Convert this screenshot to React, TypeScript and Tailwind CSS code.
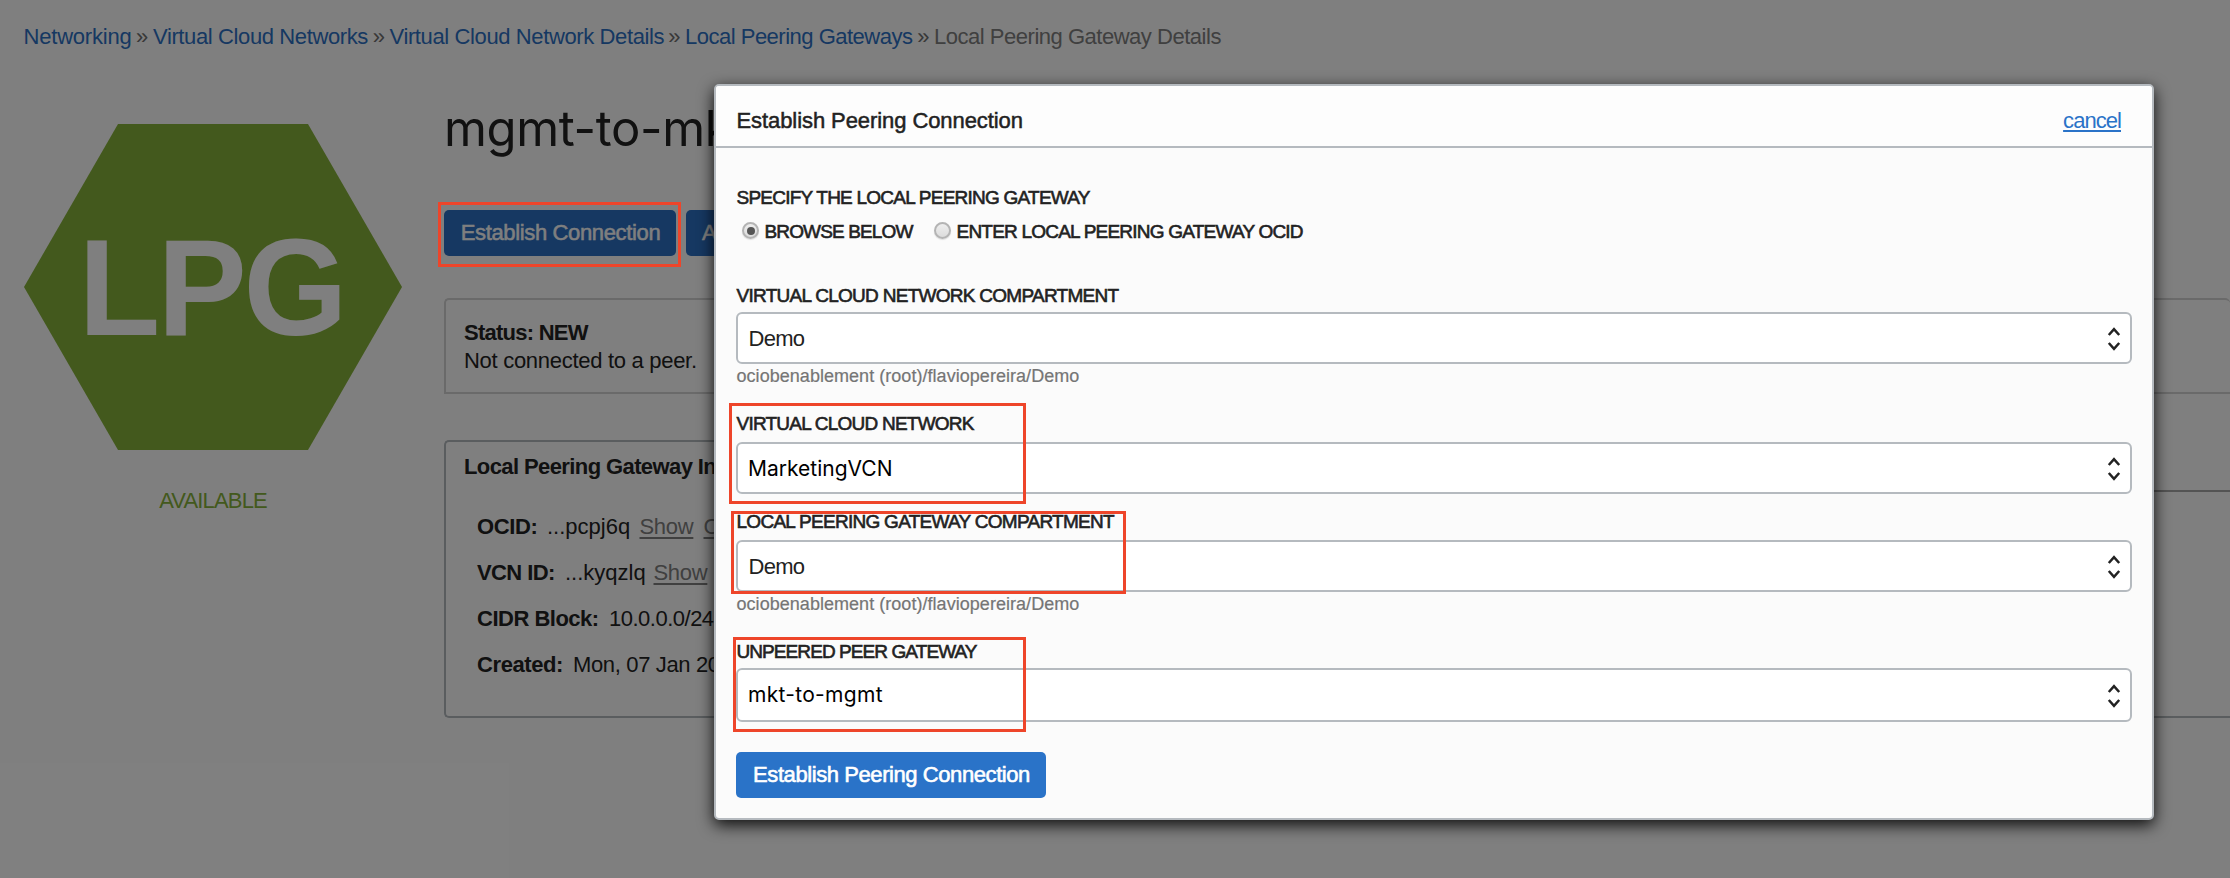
import type { ReactNode } from "react";

const crumbs = [
  { label: "Networking", className: "w-[129.5px] tracking-[-0.2px]" },
  { label: "Virtual Cloud Networks", className: "w-[236.5px] tracking-[-0.38px]" },
  { label: "Virtual Cloud Network Details", className: "w-[295.5px] tracking-[-0.38px]" },
  { label: "Local Peering Gateways", className: "w-[249px] tracking-[-0.5px]" },
];

function Breadcrumb() {
  return (
    <nav className="flex pl-[23.5px] pt-6 whitespace-nowrap">
      {crumbs.map((c) => (
        <span key={c.label} className={`flex justify-between ${c.className}`}>
          <a className="text-[#2c70c4]">{c.label}</a>
          <span className="pr-[5px] text-[#707070]">»</span>
        </span>
      ))}
      <span className="tracking-[-0.48px] text-[#808080]">Local Peering Gateway Details</span>
    </nav>
  );
}

function GatewayBadge() {
  return (
    <div className="flex w-[378px] shrink-0 flex-col items-center pt-[75px]">
      <svg width="378" height="326" viewBox="24 124 378 326">
        <polygon points="24,287 118,124 308,124 402,287 308,450 118,450" fill="#86b23a" />
        <text
          transform="scale(0.97 1)"
          x="81 162.5 251"
          y="335"
          fontFamily="Liberation Sans, sans-serif"
          fontWeight="700"
          fontSize="138"
          fill="#fff"
        >
          LPG
        </text>
      </svg>
      <span className="mt-[38px] tracking-[-0.85px] text-[#86b23a]">AVAILABLE</span>
    </div>
  );
}

function InfoRow({ label, labelClass, children }: { label: string; labelClass: string; children: ReactNode }) {
  return (
    <div className="flex whitespace-nowrap">
      <b className={labelClass}>{label}</b>
      {children}
    </div>
  );
}

function GatewayDetails() {
  const link = "tracking-[-0.3px] text-[#808080] underline decoration-2 underline-offset-[3px]";
  return (
    <div className="ml-[42px] flex min-w-0 flex-1 flex-col pt-[50px] text-[#222]">
      <h1 className="whitespace-nowrap font-[Inter] text-[49px] leading-[59px] tracking-[-0.35px]">mgmt-to-mkt</h1>
      <div className="mt-[52px] flex gap-[10px] text-white">
        <button className="h-[46px] w-[232px] rounded-[5px] bg-[#2c70c4] pb-[1px] pl-[1px] tracking-[-0.35px] [-webkit-text-stroke:0.5px_white]">
          Establish Connection
        </button>
        <button className="h-[46px] w-[150px] rounded-[5px] bg-[#2c70c4] pb-[1px] tracking-[-0.32px] [-webkit-text-stroke:0.5px_white]">
          Apply Tag(s)
        </button>
      </div>
      <section className="mt-[42px] flex h-[96px] flex-col gap-[3px] rounded-t-[5px] border-2 border-r-0 border-[#d4d4d4] pl-[18px] pt-5">
        <b className="tracking-[-0.75px]">Status: NEW</b>
        <span className="tracking-[-0.29px]">Not connected to a peer.</span>
      </section>
      <div className="mt-[46px] flex h-[52px]">
        <div className="w-[386px] rounded-tl-[5px] rounded-tr-[5px] border-l-2 border-t-2 border-[#b5babf] pl-[18px] pt-3 whitespace-nowrap">
          <b className="tracking-[-0.6px]">Local Peering Gateway Information</b>
        </div>
        <div className="flex-1 border-b-2 border-[#a8a8a8]" />
      </div>
      <section className="flex h-[226px] flex-col gap-[21px] rounded-bl-[5px] border-b-2 border-l-2 border-[#b5babf] pl-[31px] pt-[22px]">
        <InfoRow label="OCID:" labelClass="w-[70px] tracking-[-0.4px]">
          <span className="w-[92.5px]">...pcpj6q</span>
          <a className={`${link} w-[53px]`}>Show</a>
          <a className={`${link} ml-[11px]`}>Copy</a>
        </InfoRow>
        <InfoRow label="VCN ID:" labelClass="w-[88px] tracking-[-0.6px]">
          <span className="w-[88.5px]">...kyqzlq</span>
          <a className={`${link} w-[53px]`}>Show</a>
          <a className={`${link} ml-[11px]`}>Copy</a>
        </InfoRow>
        <InfoRow label="CIDR Block:" labelClass="w-[132px] tracking-[-0.5px]">
          <span className="tracking-[-0.5px]">10.0.0.0/24</span>
        </InfoRow>
        <InfoRow label="Created:" labelClass="w-[96px] tracking-[-0.4px]">
          <span className="tracking-[-0.35px]">Mon, 07 Jan 2019</span>
        </InfoRow>
      </section>
    </div>
  );
}

function Label({ children, className }: { children: ReactNode; className: string }) {
  return (
    <div className={`whitespace-nowrap text-[19px] leading-[21px] [-webkit-text-stroke:0.6px_#222] ${className}`}>
      {children}
    </div>
  );
}

function Select({ children, className }: { children: ReactNode; className: string }) {
  return (
    <div className={`flex justify-between rounded-[6px] border-2 border-[#b5babf] bg-white pl-[10px] pr-[9.5px] ${className}`}>
      {children}
      <svg className="mt-[1px]" width="14" height="24" viewBox="0 0 14 24" fill="none" stroke="currentColor" strokeWidth="2.5">
        <path d="M1.8 8 7 2.2 12.2 8M1.8 16 7 21.8 12.2 16" />
      </svg>
    </div>
  );
}

function Radio({ checked }: { checked?: boolean }) {
  return (
    <span className="mt-px flex size-[17px] shrink-0 items-center justify-center rounded-full border-2 border-[#b4b4b4] bg-linear-to-b from-[#eee] to-[#dcdcdc] shadow-[0_1px_1px_#ddd]">
      {checked && <span className="size-[8px] rounded-full bg-[#555]" />}
    </span>
  );
}

function PeeringDialog() {
  return (
    <div
      role="dialog"
      className="absolute left-[714px] top-[84px] flex h-[736px] w-[1440px] flex-col rounded-[5px] border-2 border-[#b5babf] bg-[#fbfbfb] text-[#222] shadow-[0_5px_16px_rgba(0,0,0,0.9)]"
    >
      <header className="flex h-[62px] shrink-0 justify-between rounded-t-[3px] border-b-2 border-[#b5babf] bg-[#fdfdfd] pl-[20.5px] pr-[31px] pt-[22px]">
        <h2 className="tracking-[-0.08px] [-webkit-text-stroke:0.5px_#222]">Establish Peering Connection</h2>
        <a className="tracking-[-0.95px] text-[#2a73c8] underline decoration-2 underline-offset-2">cancel</a>
      </header>
      <div className="flex flex-col items-stretch px-5 pt-[39px]">
        <Label className="pl-[0.5px] tracking-[-0.76px]">SPECIFY THE LOCAL PEERING GATEWAY</Label>
        <div className="mt-[13px] flex pl-[6px]">
          <Radio checked />
          <Label className="ml-[5.5px] w-[169.5px] tracking-[-0.86px]">BROWSE BELOW</Label>
          <Radio />
          <Label className="ml-[5.5px] tracking-[-0.78px]">ENTER LOCAL PEERING GATEWAY OCID</Label>
        </div>

        <Label className="mt-[43px] pl-[0.5px] tracking-[-0.72px]">VIRTUAL CLOUD NETWORK COMPARTMENT</Label>
        <Select className="mt-[6px] h-[52px] pt-3">
          <span className="pl-[0.5px] tracking-[-0.7px]">Demo</span>
        </Select>
        <span className="mt-[2px] pl-[0.5px] text-[18px] leading-5 tracking-[0.04px] text-[#757575] [-webkit-text-stroke:0.2px_#757575]">
          ociobenablement (root)/flaviopereira/Demo
        </span>

        <Label className="mt-[27px] pl-[0.5px] tracking-[-0.77px]">VIRTUAL CLOUD NETWORK</Label>
        <Select className="mt-2 h-[52px] pt-3">
          <span className="font-[Inter] text-[21px] text-black">MarketingVCN</span>
        </Select>

        <Label className="mt-[17px] pl-[0.5px] tracking-[-0.72px]">LOCAL PEERING GATEWAY COMPARTMENT</Label>
        <Select className="mt-2 h-[52px] pt-3">
          <span className="pl-[0.5px] tracking-[-0.7px]">Demo</span>
        </Select>
        <span className="mt-[2px] pl-[0.5px] text-[18px] leading-5 tracking-[0.04px] text-[#757575] [-webkit-text-stroke:0.2px_#757575]">
          ociobenablement (root)/flaviopereira/Demo
        </span>

        <Label className="mt-[27px] pl-[0.5px] tracking-[-0.92px]">UNPEERED PEER GATEWAY</Label>
        <Select className="mt-[6px] h-[54px] pt-[13px]">
          <span className="-mt-px font-[Inter] text-[21px] tracking-[0.3px] text-black">mkt-to-mgmt</span>
        </Select>

        <button className="mt-[30px] h-[46px] w-[310px] rounded-[5px] bg-[#2a73c8] pb-[1px] pl-[1px] tracking-[-0.42px] text-white [-webkit-text-stroke:0.6px_white]">
          Establish Peering Connection
        </button>
      </div>
    </div>
  );
}

export default function App() {
  const mark = "absolute border-[3px] border-[#ee452a]";
  return (
    <div className="relative h-[878px] w-[2230px] overflow-hidden bg-white font-['Liberation_Sans',Arial,sans-serif] text-[22px] leading-[25px]">
      <Breadcrumb />
      <main className="flex pl-6">
        <GatewayBadge />
        <GatewayDetails />
      </main>
      <div className="absolute inset-0 bg-black/50" />
      <div className={`${mark} left-[438px] top-[202px] h-[65px] w-[243px]`} />
      <PeeringDialog />
      <div className={`${mark} left-[729px] top-[403px] h-[101px] w-[297px]`} />
      <div className={`${mark} left-[731px] top-[511px] h-[83px] w-[395px]`} />
      <div className={`${mark} left-[733px] top-[637px] h-[95px] w-[293px]`} />
    </div>
  );
}
